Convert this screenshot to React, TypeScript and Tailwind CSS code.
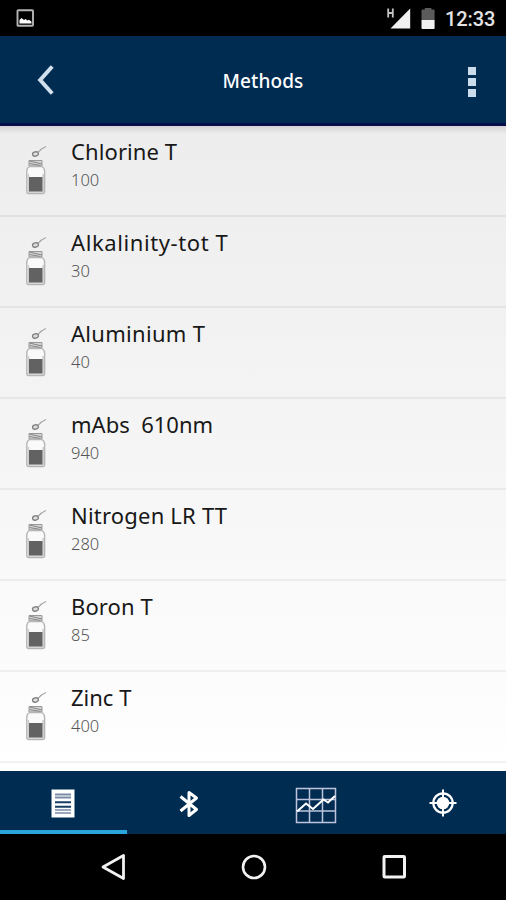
const methods = [
  { name: 'Chlorine T', code: '100', spacing: 'tracking-[0.1px]' },
  { name: 'Alkalinity-tot T', code: '30', spacing: 'tracking-[0.6px]' },
  { name: 'Aluminium T', code: '40', spacing: 'tracking-[0.3px]' },
  { name: 'mAbs  610nm', code: '940', spacing: 'tracking-[0px]' },
  { name: 'Nitrogen LR TT', code: '280', spacing: 'tracking-[0.2px]' },
  { name: 'Boron T', code: '85', spacing: 'tracking-[0.1px]' },
  { name: 'Zinc T', code: '400', spacing: 'tracking-[0px]' },
];

function Bottle() {
  return (
    <svg className="ml-[24px] mt-[18px] block h-[52px] w-[26px] shrink-0" viewBox="0 0 26 52" fill="none">
      <path d="M14 8.5Q17 4.5 22 2.5" stroke="#a5a5a5" strokeWidth="1.1" />
      <ellipse cx="11.5" cy="10" rx="3" ry="2.1" transform="rotate(-15 11.5 10)" fill="#ddd" stroke="#808080" strokeWidth="1.3" />
      <path d="M5 16.5h13v5.5H5z" fill="#d4d4d4" stroke="#999" strokeWidth="1" />
      <path d="M5.5 17 18 20M5.5 19.5l11 2" stroke="#858585" strokeWidth="1" />
      <path d="M5.5 22.5Q2.8 24 2.8 27v20.5q0 2 2 2h13.800q2 0 2-2V27q0-3-2.800-4.500z" fill="#fafafa" stroke="#b5b5b5" strokeWidth="1.4" />
      <path d="M4.300 30v18h14.900V30" stroke="#cecece" strokeWidth="1.700" />
      <path d="M5 33h13.500v14.500H5z" fill="#626262" />
    </svg>
  );
}

export default function App() {
  return (
    <div className="flex h-[900px] w-[506px] flex-col overflow-hidden bg-black font-['Noto_Sans','Open_Sans',sans-serif]">
      <div className="flex h-[36px] shrink-0 items-center bg-black">
        <svg className="ml-[16px] h-[18px] w-[19px]" viewBox="0 0 19 18">
          <rect x="1.500" y="1.200" width="15.500" height="15.600" rx="0.8" fill="none" stroke="#b4b4b4" strokeWidth="1.900" />
          <path d="M3.500 14.600v-3.600l2-2 2.500 2 1.500-1 2 1.500 1.500-.7 2.500 2v1.800z" fill="#fff" />
        </svg>
        <div className="grow" />
        <svg className="h-[36px] w-[50px]" viewBox="0 0 50 36">
          <path d="M3.200 8.500v9M7.800 8.500v9M3 13h5" stroke="#c4c4c4" strokeWidth="1.800" fill="none" />
          <path d="M25.200 8.500V28.500H5.500z" fill="#f0f0f0" />
          <path d="M36.500 10.500q0-1 1-1h2.300V8h6.600v1.500h2.200q1 0 1 1V20h-13.100z" fill="#5b5b5b" />
          <path d="M36.500 20h13.100v8q0 1-1 1H37.500q-1 0-1-1z" fill="#f0f0f0" />
        </svg>
        <div className="ml-[10.500px] mr-[10px] w-[51px] whitespace-nowrap pt-[2px] font-['Roboto',sans-serif] text-[20px] font-medium leading-[24px] tracking-[-0.1px] text-[#e4e4e4]">12:33</div>
      </div>

      <header className="flex h-[90px] shrink-0 items-center border-b-[3px] border-[#05104a] bg-[#002c52]">
        <svg className="ml-[36px] mt-[1px] h-[34px] w-[20px]" viewBox="0 0 20 34">
          <path d="M16.200 3.500 4.200 17l12 13.500" fill="none" stroke="#d0e0ee" strokeWidth="4" />
        </svg>
        <h1 className="grow pl-[2px] pt-[2px] text-center text-[19px] font-medium leading-[26px] tracking-[0.1px] text-white">Methods</h1>
        <div className="mr-[30px] mt-[4px] flex flex-col gap-[3px]">
          <div className="size-[8px] bg-[#cbdded]" />
          <div className="size-[8px] bg-[#cbdded]" />
          <div className="size-[8px] bg-[#cbdded]" />
        </div>
      </header>

      <main className="flex h-[645px] shrink-0 flex-col bg-linear-to-b from-[#ededed] via-[#f5f5f5] to-white">
        <div className="-mb-[8px] h-[8px] shrink-0 bg-linear-to-b from-[#d6d4d6] to-transparent" />
        {methods.map((method) => (
          <div key={method.code} className="flex h-[91px] shrink-0 border-b-2 border-black/5">
            <Bottle />
            <div className="ml-[21px] pt-[10px]">
              <div className={`whitespace-pre text-[22px] leading-[30px] text-[#181818] ${method.spacing}`}>{method.name}</div>
              <div className="mt-[1px] text-[16.500px] font-light leading-[25px] text-[#555]">{method.code}</div>
            </div>
          </div>
        ))}
      </main>

      <nav className="grid h-[63px] shrink-0 grid-cols-4 bg-[#002c52]">
        <div className="flex justify-center border-b-4 border-[#2ba6da]">
          <svg className="mt-[18px] h-[30px] w-[24px]" viewBox="0 0 24 30">
            <path d="M.5.500h23v28H.5z" fill="#fff" />
            <path d="M4 5.500h16M4 8.500h16" stroke="#7b8ba5" strokeWidth="1.900" />
            <path d="M4 13.300h16M4 17.700h16" stroke="#173c65" strokeWidth="1.900" />
            <path d="M4 21h16M4 24h16" stroke="#7b8ba5" strokeWidth="1.700" />
          </svg>
        </div>
        <div className="flex justify-center pr-[2px]">
          <svg className="mt-[18px] h-[30px] w-[22px]" viewBox="0 0 22 30" fill="none">
            <path d="m2.500 7.500 16 13-7.500 6V3.500l7.500 5.500-16 13" stroke="#fff" strokeWidth="3" strokeLinejoin="round" />
          </svg>
        </div>
        <div className="flex justify-center">
          <svg className="mt-[16px] h-[38px] w-[42px]" viewBox="0 0 42 38" fill="none">
            <path d="M1.500 1.500h39v34h-39zM14.500 1.500v34M27.500 1.500v34M1.500 12.500h39M1.500 24h39" stroke="#bfc3dc" strokeWidth="1.500" />
            <path d="m2 24.500 9-8 7 5.500 10.500-9.500 4.500 3 7-6.500" stroke="#fff" strokeWidth="2.100" />
          </svg>
        </div>
        <div className="flex justify-center">
          <svg className="mt-[18px] h-[28px] w-[28px]" viewBox="0 0 28 28" fill="none">
            <circle cx="14" cy="14" r="9.700" stroke="#fff" strokeWidth="2.200" />
            <circle cx="14" cy="14" r="6.300" fill="#fff" />
            <path d="M14 .5v27M.5 14h27" stroke="#fff" strokeWidth="2" />
          </svg>
        </div>
      </nav>

      <div className="flex h-[66px] shrink-0 items-center bg-black">
        <svg className="ml-[100px] h-[30px] w-[28px]" viewBox="0 0 28 30" fill="none">
          <path d="M23.500 3.500v23L3 15z" stroke="#f2f2f2" strokeWidth="2.800" strokeLinejoin="round" />
        </svg>
        <svg className="ml-[111px] h-[30px] w-[30px]" viewBox="0 0 30 30" fill="none">
          <circle cx="15" cy="15" r="11" stroke="#f2f2f2" strokeWidth="2.600" />
        </svg>
        <svg className="ml-[110px] h-[30px] w-[30px]" viewBox="0 0 30 30" fill="none">
          <rect x="5" y="4.500" width="20.500" height="20.500" rx="0.8" stroke="#f2f2f2" strokeWidth="3" />
        </svg>
      </div>
    </div>
  );
}
